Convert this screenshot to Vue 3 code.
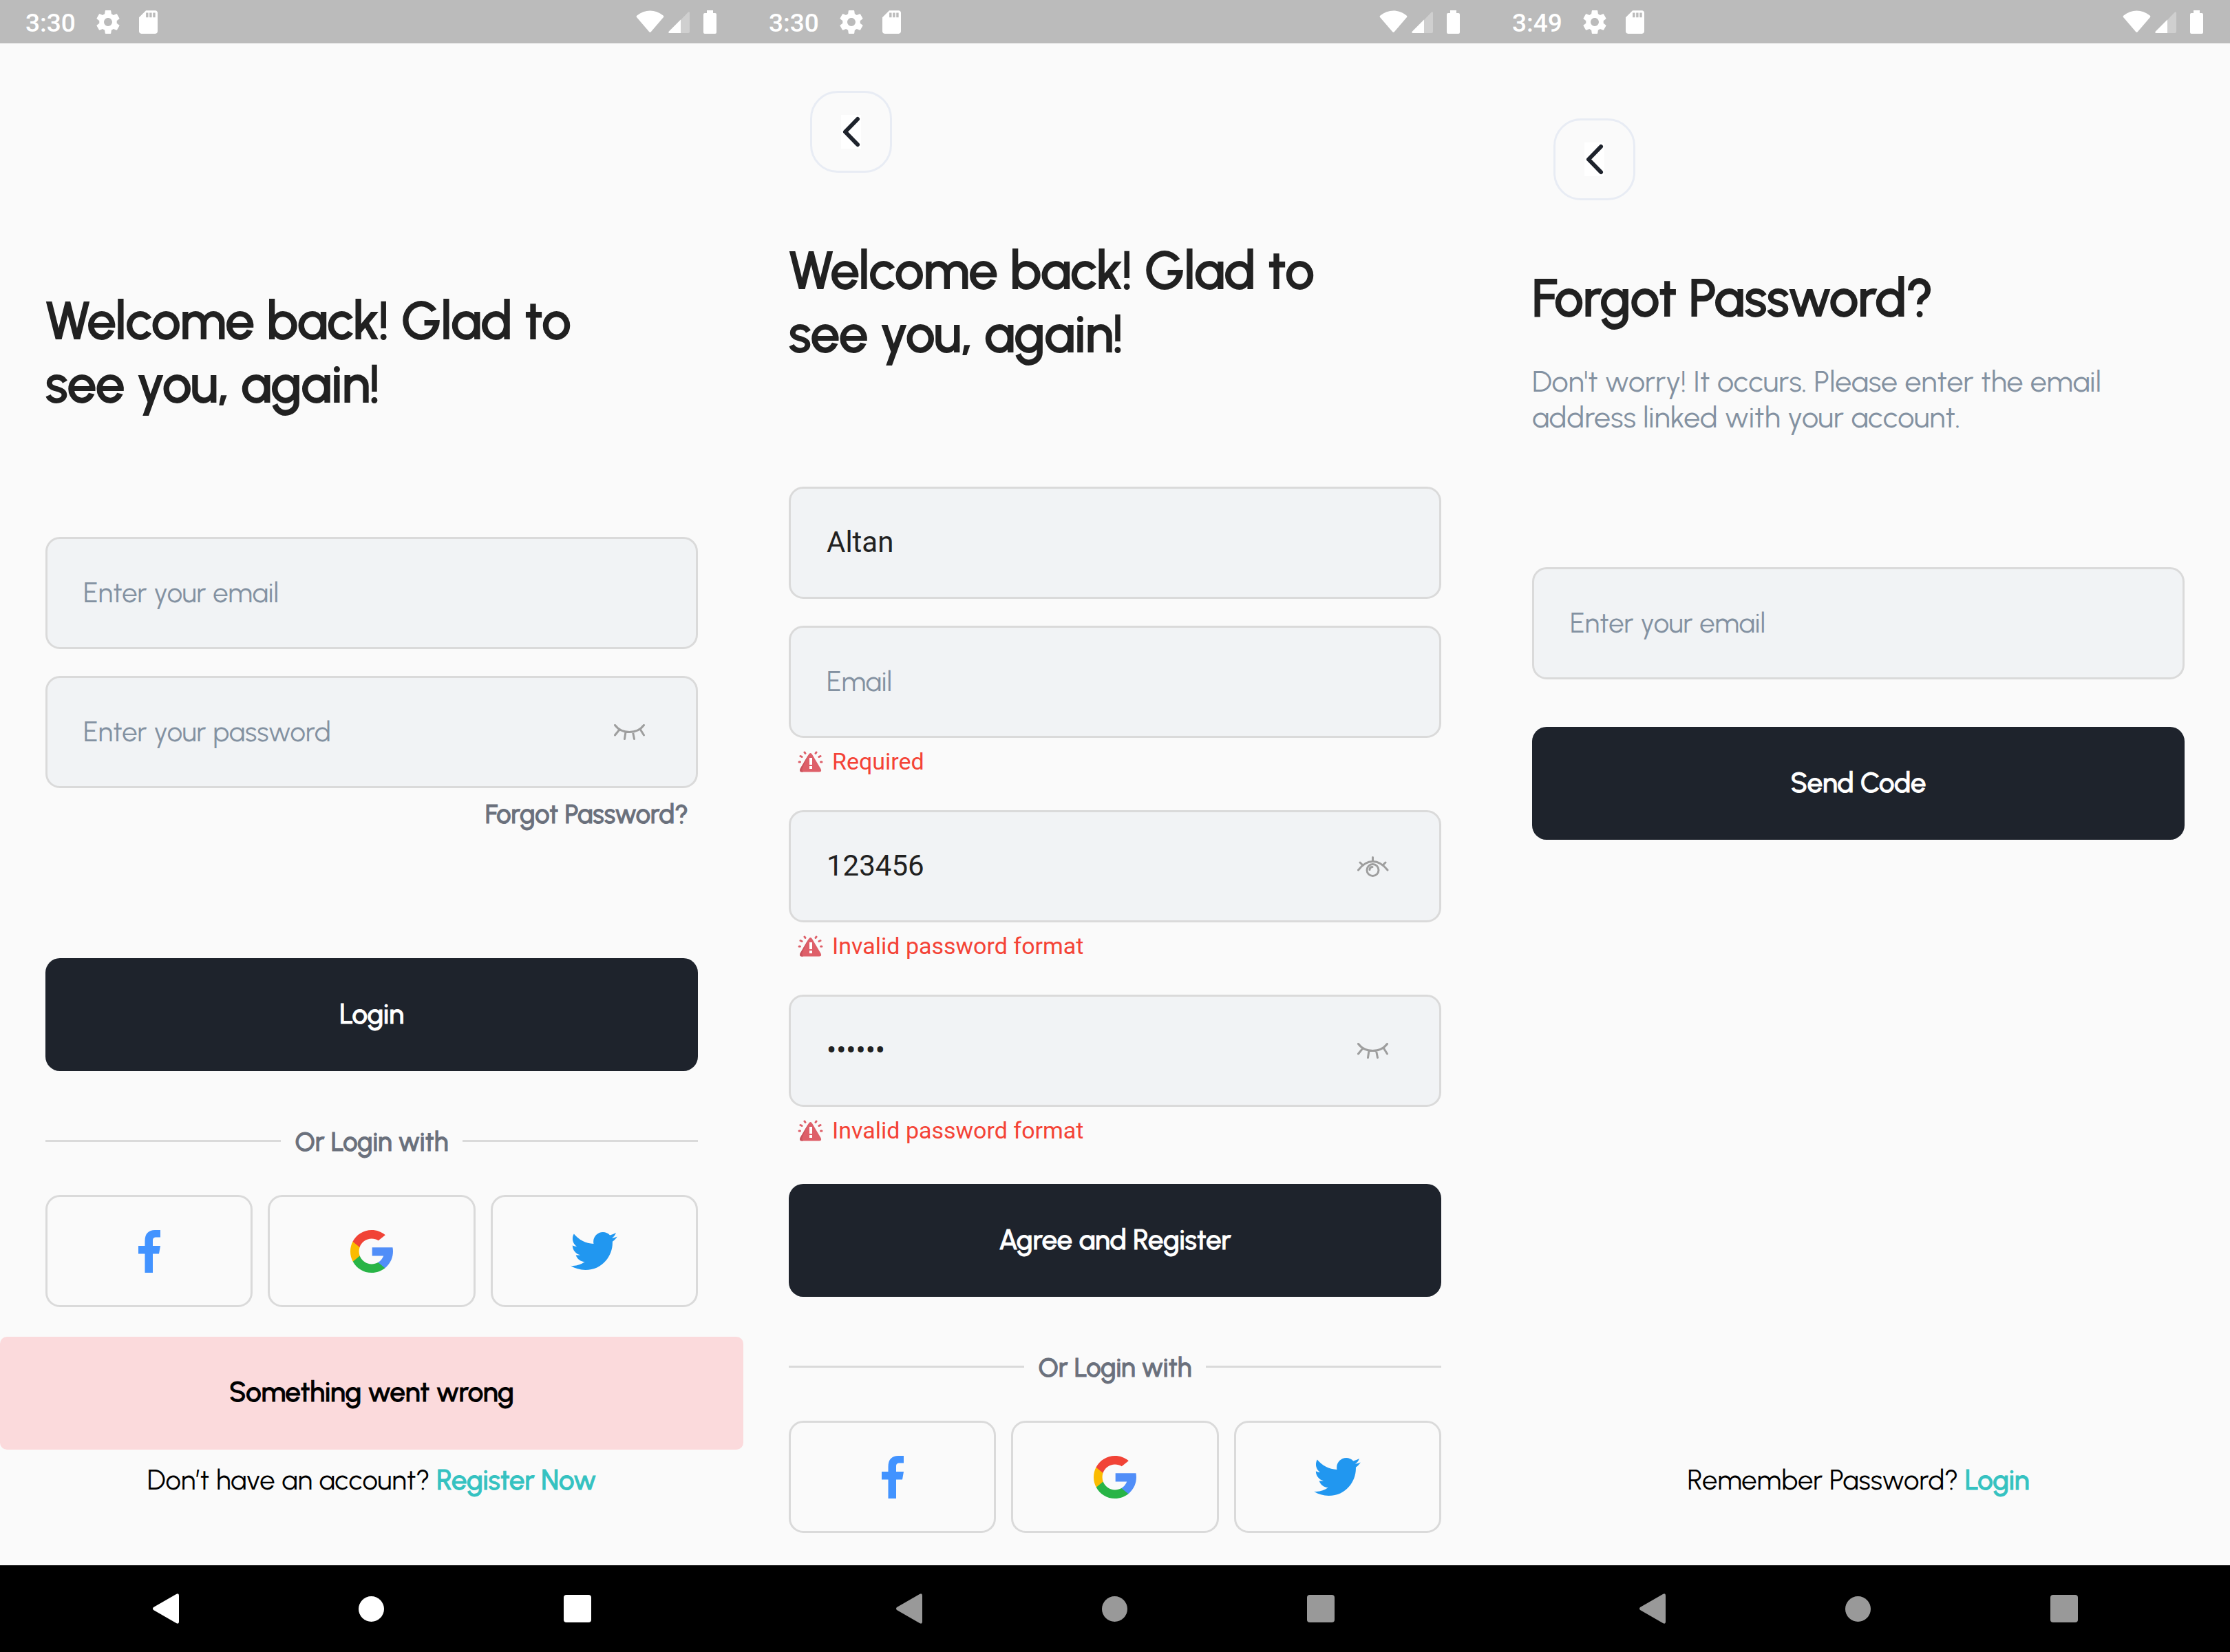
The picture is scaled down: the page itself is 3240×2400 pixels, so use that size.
<script setup>
import { ref } from 'vue'

const screens = ref([
  {
    id: 'login',
    time: '3:30',
    title: 'Welcome back! Glad to see you, again!',
    fields: [
      { id: 'login-email', type: 'email', hint: 'Enter your email', value: '' },
      { id: 'login-password', type: 'password', hint: 'Enter your password', value: '', eye: 'closed' }
    ],
    forgot: true,
    action: 'Login',
    social: true,
    toast: 'Something went wrong',
    prompt: 'Don’t have an account?',
    link: 'Register Now'
  },
  {
    id: 'register',
    time: '3:30',
    back: true,
    dimNav: true,
    title: 'Welcome back! Glad to see you, again!',
    fields: [
      { id: 'register-name', type: 'text', hint: 'Username', value: 'Altan' },
      { id: 'register-email', type: 'email', hint: 'Email', value: '', error: 'Required' },
      { id: 'register-password', type: 'text', hint: 'Password', value: '123456', eye: 'open', error: 'Invalid password format' },
      { id: 'register-confirm', type: 'password', hint: 'Confirm password', value: '123456', eye: 'closed', error: 'Invalid password format' }
    ],
    action: 'Agree and Register',
    social: true
  },
  {
    id: 'forgot',
    time: '3:49',
    back: true,
    dimNav: true,
    title: 'Forgot Password?',
    intro: "Don't worry! It occurs. Please enter the email address linked with your account.",
    fields: [{ id: 'forgot-email', type: 'email', hint: 'Enter your email', value: '' }],
    action: 'Send Code',
    prompt: 'Remember Password?',
    link: 'Login'
  }
])
</script>

<template>
  <div class="board">
    <section v-for="s in screens" :key="s.id" class="phone" :class="s.id">
      <header class="status">
        <span class="time">{{ s.time }}</span>
        <svg class="gear" width="34" height="34" viewBox="2 2 20 20" fill="#fff" aria-hidden="true">
          <path d="M19.43 12.98c.04-.32.07-.64.07-.98s-.03-.66-.07-.98l2.11-1.65c.19-.15.24-.42.12-.64l-2-3.46c-.12-.22-.39-.3-.61-.22l-2.49 1c-.52-.4-1.08-.73-1.69-.98l-.38-2.65C14.46 2.18 14.25 2 14 2h-4c-.25 0-.46.18-.49.42l-.38 2.65c-.61.25-1.17.59-1.69.98l-2.49-1c-.23-.09-.49 0-.61.22l-2 3.46c-.13.22-.07.49.12.64l2.11 1.65c-.04.32-.07.65-.07.98s.03.66.07.98l-2.11 1.65c-.19.15-.24.42-.12.64l2 3.46c.12.22.39.3.61.22l2.49-1c.52.4 1.08.73 1.69.98l.38 2.65c.03.24.24.42.49.42h4c.25 0 .46-.18.49-.42l.38-2.65c.61-.25 1.17-.59 1.69-.98l2.49 1c.23.09.49 0 .61-.22l2-3.46c.12-.22.07-.49-.12-.64l-2.11-1.65zM12 15.5c-1.93 0-3.5-1.57-3.5-3.5s1.57-3.5 3.5-3.5 3.5 1.57 3.5 3.5-1.57 3.5-3.5 3.5z" />
        </svg>
        <svg class="card" width="27" height="34" viewBox="4 2 16 20" fill="#fff" aria-hidden="true">
          <path d="M18 2h-8L4.02 8 4 20c0 1.1.9 2 2 2h12c1.1 0 2-.9 2-2V4c0-1.1-.9-2-2-2zm-6 6h-2V4h2v4zm3 0h-2V4h2v4zm3 0h-2V4h2v4z" />
        </svg>
        <svg class="wifi" width="41" height="34" viewBox="0 0 41 34" fill="#fff" aria-hidden="true">
          <path d="M22 31Q20.500 33 19 31L1 10Q0 8.500 1.500 7.500C13-2 28-2 39.500 7.500Q41 8.500 40 10Z" />
        </svg>
        <svg class="signal" width="31" height="34" viewBox="0 0 31 34" fill="#fff" aria-hidden="true">
          <path opacity=".3" d="M18 14L28.500 3Q31 1 31 4V31Q31 33 29 33H18Z" />
          <path d="M18 13.500V33H2Q-1 33 1 30.500Z" />
        </svg>
        <svg width="19" height="34" viewBox="0 0 19 34" fill="#fff" aria-hidden="true">
          <path d="M5 0H14V4H17Q19 4 19 6V32Q19 34 17 34H2Q0 34 0 32V6Q0 4 2 4H5Z" />
        </svg>
      </header>

      <main class="content">
        <button v-if="s.back" type="button" class="back" aria-label="Back">
          <svg width="29" height="49" viewBox="0 0 29 49" fill="none" aria-hidden="true">
            <path fill="#fff" d="M0 0H29V49H0Z" />
            <path d="M24 6L6 24.500L24 43" stroke="#1e232c" stroke-width="6" stroke-linecap="round" stroke-linejoin="round" />
          </svg>
        </button>

        <h1>{{ s.title }}</h1>
        <p v-if="s.intro" class="intro">{{ s.intro }}</p>

        <form class="form" @submit.prevent>
          <div v-for="f in s.fields" :key="f.id" class="row" :class="{ failed: f.error }">
            <div class="field">
              <input :id="f.id" v-model="f.value" :type="f.type" :placeholder="f.hint" :aria-label="f.hint" />
              <button v-if="f.eye" type="button" class="eye" aria-label="Toggle password visibility">
                <svg v-if="f.eye === 'closed'" width="46" height="24" viewBox="0 0 46 24" aria-hidden="true">
                  <path d="M1.500 1.500Q9 11.500 22.500 11.500T43.500 1.500M8 8L1.500 16M17 11.500L15.500 21.500M27.500 11.500L29.500 21.500M38.500 8L43.500 16" />
                </svg>
                <svg v-else width="46" height="30" viewBox="0 0 46 30" aria-hidden="true">
                  <path d="M1.500 20Q11 7.500 22.500 7.500T44 20M22.500 1.500V7M4 9L8 13M41 9L37 13" />
                  <circle cx="22.500" cy="20" r="8.500" />
                  <path d="M18 19.500Q18 15.500 22 15.500" />
                </svg>
              </button>
            </div>
            <p v-if="f.error" class="error">
              <svg width="37" height="31" viewBox="0 0 37 31" aria-hidden="true">
                <path fill="#de5f69" d="M16 5Q18.500 1 21 5L33.500 26Q35.500 30.500 31 30.500H6Q2 30.500 3.500 26Z" />
                <path fill="#c9535d" d="M14 8L16 5Q6.500 24 6.500 27T8 30.500H6Q2 30.500 3.500 26Z" />
                <path fill="#fff" d="M17 10H21V20H17ZM17 22H21V26H17Z" />
                <path fill="none" stroke="#de5f69" stroke-width="3" stroke-linecap="round" d="M2 16H3.500M4 7.500L6 8.500M10 2L11 3.500M27 2L26 3.500M33 7.500L31 8.500M33.500 16H35" />
              </svg>
              <span>{{ f.error }}</span>
            </p>
          </div>
          <a v-if="s.forgot" href="#forgot" class="forgot-link">Forgot Password?</a>
          <button type="submit" class="primary">{{ s.action }}</button>
        </form>

        <template v-if="s.social">
          <div class="divider"><span>Or Login with</span></div>
          <div class="social">
            <button type="button" aria-label="Facebook">
              <svg width="32" height="62" viewBox="0 0 32 62" aria-hidden="true">
                <path fill="#4293ff" d="M9.500 62V34.500H0V23H9.500V16C9.500 5 15 0 24 0H32V10.500H26.500C22 10.500 21 12 21 16V23H32L30 34.500H21V62Z" />
              </svg>
            </button>
            <button type="button" aria-label="Google">
              <svg width="62" height="62" viewBox="0 0 512 512" aria-hidden="true">
                <path fill="#fbbb00" d="M113.470 309.408L95.648 375.940l-65.139 1.378C11.042 341.211 0 299.900 0 256c0-42.451 10.324-82.483 28.624-117.732h.014l57.992 10.632 25.404 57.644c-5.317 15.501-8.215 32.141-8.215 49.456.002 18.792 3.406 36.797 9.651 53.408z" />
                <path fill="#518ef8" d="M507.527 208.176C510.467 223.662 512 239.655 512 256c0 18.328-1.927 36.206-5.598 53.451-12.462 58.683-45.025 109.925-90.134 146.187l-.014-.014-73.044-3.727-10.338-64.535c29.932-17.554 53.324-45.025 65.646-77.911H261.628V208.176z" />
                <path fill="#28b446" d="M416.253 455.624l.014.014C372.396 490.901 316.666 512 256 512c-97.491 0-182.252-54.491-225.491-134.681l82.961-67.910c21.619 57.698 77.278 98.771 142.530 98.771 28.047 0 54.323-7.582 76.870-20.818z" />
                <path fill="#f14336" d="M419.404 58.936l-82.933 67.896c-23.335-14.586-50.919-23.012-80.471-23.012-66.729 0-123.429 42.957-143.965 102.724l-83.397-68.276h-.014C71.230 56.123 157.060 0 256 0c62.115 0 119.068 22.126 163.404 58.936z" />
              </svg>
            </button>
            <button type="button" aria-label="Twitter">
              <svg width="68" height="55" viewBox="0 48 512 416" aria-hidden="true">
                <path fill="#2197f0" d="M512 97.248c-19.040 8.352-39.328 13.888-60.480 16.576 21.760-12.992 38.368-33.408 46.176-58.016-20.288 12.096-42.688 20.640-66.560 25.408C411.872 60.704 384.416 48 354.464 48c-58.112 0-104.896 47.168-104.896 104.992 0 8.320.704 16.320 2.432 23.936-87.264-4.256-164.480-46.080-216.352-109.792-9.056 15.712-14.368 33.696-14.368 53.056 0 36.352 18.720 68.576 46.624 87.232-16.864-.32-33.408-5.216-47.424-12.928v1.152c0 51.008 36.384 93.376 84.096 103.136-8.544 2.336-17.856 3.456-27.520 3.456-6.720 0-13.504-.384-19.872-1.792 13.600 41.568 52.192 72.128 98.080 73.120-35.712 27.936-81.056 44.768-130.144 44.768-8.608 0-16.864-.384-25.120-1.440C46.496 446.880 101.600 464 161.024 464c193.152 0 298.752-160 298.752-298.688 0-4.640-.16-9.120-.384-13.568C480.224 136.960 497.728 118.496 512 97.248z" />
              </svg>
            </button>
          </div>
        </template>

        <div v-if="s.toast" class="toast" role="alert">{{ s.toast }}</div>
        <p v-if="s.prompt" class="prompt">{{ s.prompt }} <a href="#switch">{{ s.link }}</a></p>
      </main>

      <nav class="system" :class="{ dim: s.dimNav }" aria-label="System navigation">
        <button type="button" aria-label="Back">
          <svg width="38" height="44" viewBox="0 0 38 44" aria-hidden="true">
            <path d="M34 1Q38-1 38 3V41Q38 45 34 43L1 24Q-1 22 1 20Z" />
          </svg>
        </button>
        <button type="button" aria-label="Home">
          <svg width="37" height="37" viewBox="0 0 37 37" aria-hidden="true"><circle cx="18.500" cy="18.500" r="18.500" /></svg>
        </button>
        <button type="button" aria-label="Overview">
          <svg width="40" height="40" viewBox="0 0 40 40" aria-hidden="true"><rect width="40" height="40" rx="4" /></svg>
        </button>
      </nav>
    </section>
  </div>
</template>

<style>
body {
  margin: 0;
  background: #fafafa;
}
</style>

<style scoped>
.board {
  display: grid;
  grid-template-columns: repeat(3, 1fr);
  min-height: 100vh;
  font-family: Urbanist, Lato, sans-serif;
}

.phone {
  display: flex;
  flex-direction: column;
  min-width: 0;
  background: #fafafa;
}

button {
  padding: 0;
  border: 0;
  background: none;
  font-family: inherit;
}

svg {
  display: block;
  flex: none;
}

a {
  text-decoration: none;
}

/* Medium weight thickened by an outline in the text's own colour */
h1,
.forgot-link,
.primary,
.divider,
.toast,
.prompt a {
  font-weight: 500;
  -webkit-text-stroke: 1px currentColor;
}

.status {
  display: flex;
  align-items: center;
  height: 63px;
  padding: 0 39px 0 37px;
  background: #bbb;
}

.time {
  padding-top: 4px;
  font: 500 37px/44px Roboto, sans-serif;
  color: #fff;
}

.gear {
  margin-left: 30px;
}

.card {
  margin-left: 28px;
}

.wifi {
  margin-left: auto;
}

.signal {
  margin: 0 20px 0 6px;
}

.content {
  display: flex;
  flex: 1;
  flex-direction: column;
  padding: 69px 66px 100px;
}

.login .content {
  padding-top: 357px;
}

.register .content {
  padding-bottom: 46px;
}

.forgot .content {
  padding-top: 109px;
}

.back {
  display: flex;
  align-items: center;
  justify-content: center;
  box-sizing: border-box;
  width: 119px;
  height: 119px;
  margin: 0 0 96px 31px;
  border: 3px solid #e8ecf4;
  border-radius: 40px;
}

h1 {
  max-width: 820px;
  margin: 0;
  font-size: 75px;
  line-height: 92px;
  color: #212121;
  -webkit-text-stroke-width: 2px;
}

.intro {
  margin: 49px 0 0;
  font-size: 43px;
  line-height: 52px;
  color: #8391a1;
}

.form {
  display: flex;
  flex-direction: column;
  margin-top: 176px;
}

.forgot .form {
  margin-top: 192px;
}

.row + .row {
  margin-top: 39px;
}

.row.failed + .row {
  margin-top: 49px;
}

.field {
  display: flex;
  align-items: center;
  box-sizing: border-box;
  height: 163px;
  padding: 0 73px 0 52px;
  border: 3px solid #dadada;
  border-radius: 21px;
  background: #f1f3f5;
}

input {
  box-sizing: border-box;
  flex: 1;
  min-width: 0;
  height: 100%;
  padding: 0 0 2px;
  border: 0;
  outline: 0;
  background: none;
  font: 42px Roboto, sans-serif;
  color: #212121;
}

input::placeholder {
  font: 40px Urbanist, Lato, sans-serif;
  color: #8391a1;
  opacity: 1;
}

.eye svg {
  fill: none;
  stroke: #9e9e9e;
  stroke-width: 3;
  stroke-linecap: round;
}

.error {
  display: flex;
  align-items: center;
  gap: 13px;
  margin: 12px 0 0 13px;
  font: 34px/44px Roboto, sans-serif;
  color: #f44336;
}

.forgot-link {
  align-self: flex-end;
  margin: 16px 14px 118px 0;
  font-size: 38px;
  line-height: 44px;
  color: #6a707c;
}

.primary {
  height: 164px;
  margin-top: 69px;
  padding-bottom: 2px;
  border-radius: 21px;
  background: #1e232c;
  font-size: 40px;
  color: #fff;
}

.register .primary {
  margin-top: 56px;
}

.divider {
  display: flex;
  align-items: center;
  gap: 21px;
  margin-top: 81px;
  font-size: 38px;
  line-height: 44px;
  color: #6a707c;
}

.divider::before,
.divider::after {
  flex: 1;
  height: 3px;
  margin-bottom: 3px;
  background: #dadada;
  content: '';
}

.social {
  display: grid;
  grid-template-columns: repeat(3, 1fr);
  gap: 22px;
  margin-top: 55px;
}

.social button {
  display: flex;
  align-items: center;
  justify-content: center;
  box-sizing: border-box;
  height: 163px;
  border: 3px solid #dadada;
  border-radius: 21px;
}

.toast {
  margin: 43px -66px 0;
  padding-bottom: 4px;
  border-radius: 10px;
  background: #fbdadc;
  font-size: 40px;
  line-height: 160px;
  text-align: center;
  color: #000;
}

.prompt {
  margin: auto 0 0;
  font-size: 40px;
  line-height: 48px;
  text-align: center;
  color: #000;
}

.prompt a {
  color: #35c2c1;
}

.system {
  display: flex;
  align-items: center;
  justify-content: center;
  gap: 261px;
  height: 126px;
  background: #000;
}

.system svg {
  fill: #fff;
}

.system.dim svg {
  fill: #999;
}
</style>
